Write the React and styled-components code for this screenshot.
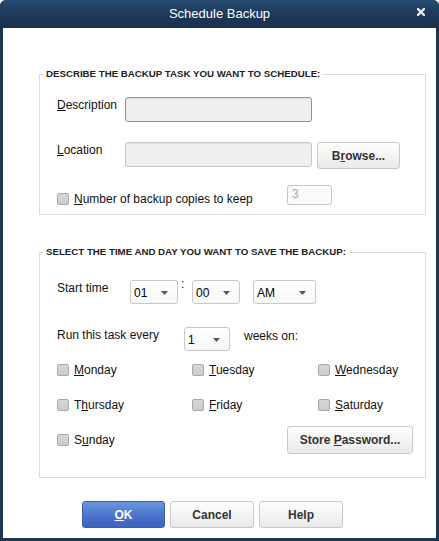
import React from "react";
import styled, { createGlobalStyle } from "styled-components";

const Global = createGlobalStyle`
  html, body { margin: 0; padding: 0; background: #fff; }
  body { font-family: "Liberation Sans", Arial, sans-serif; font-size: 12px; color: #111; }
  * { box-sizing: border-box; }
`;

const Window = styled.div`
  width: 439px;
  height: 541px;
  display: flex;
  flex-direction: column;
  background: #1c3553;
  border-radius: 6px 6px 0 0;
  padding: 0 3px 3px 3px;
`;

const TitleBar = styled.div`
  height: 28px;
  margin: 0 -3px;
  display: flex;
  align-items: center;
  justify-content: center;
  position: relative;
  border-radius: 6px 6px 0 0;
  background: linear-gradient(#264a70, #1c3656 60%, #1a3150);
  color: #fff;
  font-size: 13px;
  padding-bottom: 1px;
`;

const Close = styled.svg`
  position: absolute;
  right: 14px;
  top: 8px;
`;

const Body = styled.div`
  flex: 1;
  background: #fff;
  display: flex;
  flex-direction: column;
  padding: 40px 10px 0 36px;
`;

const Group = styled.fieldset`
  margin: 0 0 ${(p) => p.$gap || 0}px 0;
  border: 1px solid #dcdcdc;
  padding: ${(p) => p.$pad};
  min-width: 0;
`;

const Legend = styled.legend`
  font-size: 9.7px;
  font-weight: bold;
  line-height: 12px;
  padding: 0 3px;
  margin-left: -14px;
  color: #222;
  text-transform: uppercase;
`;

const Row = styled.div`
  display: flex;
  align-items: ${(p) => p.$align || "flex-start"};
  justify-content: ${(p) => p.$justify || "flex-start"};
  height: ${(p) => p.$h}px;
  margin-top: ${(p) => p.$mt || 0}px;
`;

const Label = styled.div`
  width: ${(p) => p.$w}px;
  line-height: 14px;
  padding-top: 1px;
  color: #111;
  white-space: nowrap;
`;

const U = styled.span`
  text-decoration: underline;
  text-underline-offset: 1px;
`;

const TextInput = styled.div`
  width: ${(p) => p.$w}px;
  height: ${(p) => p.$h || 25}px;
  border-radius: 3px;
  border: 1px solid ${(p) => (p.$focus ? "#6f97d8" : "#c6c6c6")};
  background: ${(p) => (p.$disabled ? "#fbfbfb" : "#efefef")};
  box-shadow: ${(p) => (p.$disabled ? "none" : "inset 0 1px 1px rgba(0,0,0,0.06)")};
  color: #aaa;
  font-size: 12px;
  padding: 1px 4px;
  line-height: 14px;
`;

const Button = styled.div`
  width: ${(p) => p.$w}px;
  height: ${(p) => p.$h || 27}px;
  display: flex;
  align-items: center;
  justify-content: center;
  border-radius: 3px;
  font-weight: bold;
  font-size: 12px;
  border: 1px solid ${(p) => (p.$primary ? "#3b5ea6" : "#c9c9c9")};
  background: ${(p) =>
    p.$primary
      ? "linear-gradient(#6b98df, #4a74cb 55%, #3d63bd)"
      : "linear-gradient(#fefefe, #f2f2f2 60%, #e9e9e9)"};
  color: ${(p) => (p.$primary ? "#fff" : "#333")};
  margin-left: ${(p) => p.$ml || 0}px;
  flex-shrink: 0;
`;

const Check = styled.div`
  width: 12px;
  height: 12px;
  border-radius: 2px;
  border: 1px solid #a9a9a9;
  background: linear-gradient(#d6d6d6, #cccccc);
  flex-shrink: 0;
`;

const CheckItem = styled.div`
  display: flex;
  align-items: center;
  gap: 5px;
  width: ${(p) => (p.$w ? p.$w + "px" : "auto")};
  margin-top: ${(p) => p.$mt || 0}px;
  color: #111;
  line-height: 14px;
  white-space: nowrap;
`;

const SelectBox = styled.div`
  width: ${(p) => p.$w}px;
  height: 24px;
  border: 1px solid #c8c8c8;
  border-radius: 3px;
  background: linear-gradient(#ffffff, #f7f7f7);
  display: flex;
  align-items: center;
  justify-content: space-between;
  padding: 1px 9px 0 3px;
  color: #000;
  margin-left: ${(p) => p.$ml || 0}px;
  flex-shrink: 0;
`;

const Colon = styled.div`
  width: 14px;
  padding-left: 3px;
  line-height: 12px;
  margin-top: -2px;
`;

const Text = styled.div`
  margin-left: ${(p) => p.$ml || 0}px;
  line-height: 14px;
  padding-top: 2px;
  white-space: nowrap;
`;

const Days = styled.div`
  display: grid;
  grid-template-columns: 135px 126px 1fr;
  grid-auto-rows: 35px;
  align-items: center;
  margin-top: 1px;
`;

const Footer = styled.div`
  display: flex;
  gap: 5px;
  padding-left: 43px;
  margin-top: 23px;
`;

const Arrow = () => (
  <svg width="7" height="4" viewBox="0 0 7 4">
    <path d="M0 0 H7 L3.5 4 Z" fill="#555" />
  </svg>
);

const Select = ({ value, w, ml }) => (
  <SelectBox $w={w} $ml={ml}>
    <span>{value}</span>
    <Arrow />
  </SelectBox>
);

const Day = ({ pre, u, post, w }) => (
  <CheckItem $w={w}>
    <Check />
    <span>
      {pre}
      <U>{u}</U>
      {post}
    </span>
  </CheckItem>
);

export default function App() {
  return (
    <>
      <Global />
      <Window>
        <TitleBar>
          Schedule Backup
          <Close width="8" height="8" viewBox="0 0 8 8">
            <path d="M1 1 L7 7 M7 1 L1 7" stroke="#e4e8ee" strokeWidth="2.4" strokeLinecap="square" />
          </Close>
        </TitleBar>
        <Body>
          <Group $pad="17px 10px 9px 17px" $gap={31}>
            <Legend>Describe the backup task you want to schedule:</Legend>
            <Row $h={25}>
              <Label $w={68}>
                <U>D</U>escription
              </Label>
              <TextInput $w={187} $focus />
            </Row>
            <Row $h={27} $mt={20}>
              <Label $w={68}>
                <U>L</U>ocation
              </Label>
              <TextInput $w={187} />
              <Button $w={83} $ml={5}>
                B<U>r</U>owse...
              </Button>
            </Row>
            <Row $h={20} $mt={16}>
              <CheckItem $w={230} $mt={7}>
                <Check />
                <span>
                  <U>N</U>umber of backup copies to keep
                </span>
              </CheckItem>
              <TextInput $w={45} $h={20} $disabled>
                3
              </TextInput>
            </Row>
          </Group>
          <Group $pad="22px 12px 23px 17px" $gap={0}>
            <Legend>Select the time and day you want to save the backup:</Legend>
            <Row $h={24}>
              <Label $w={73}>Start time</Label>
              <Select value="01" w={48} />
              <Colon>:</Colon>
              <Select value="00" w={48} />
              <Select value="AM" w={63} ml={13} />
            </Row>
            <Row $h={24} $mt={23}>
              <Label $w={127}>Run this task every</Label>
              <Select value="1" w={46} />
              <Text $ml={14}>weeks on:</Text>
            </Row>
            <Days>
              <Day pre="" u="M" post="onday" />
              <Day pre="" u="T" post="uesday" />
              <Day pre="" u="W" post="ednesday" />
              <Day pre="T" u="h" post="ursday" />
              <Day pre="" u="F" post="riday" />
              <Day pre="" u="S" post="aturday" />
            </Days>
            <Row $h={28} $mt={4} $align="center" $justify="space-between">
              <Day pre="S" u="u" post="nday" />
              <Button $w={126} $h={28}>
                Store&nbsp;<U>P</U>assword...
              </Button>
            </Row>
          </Group>
          <Footer>
            <Button $w={83} $primary>
              <U>O</U>K
            </Button>
            <Button $w={84}>Cancel</Button>
            <Button $w={84}>Help</Button>
          </Footer>
        </Body>
      </Window>
    </>
  );
}
